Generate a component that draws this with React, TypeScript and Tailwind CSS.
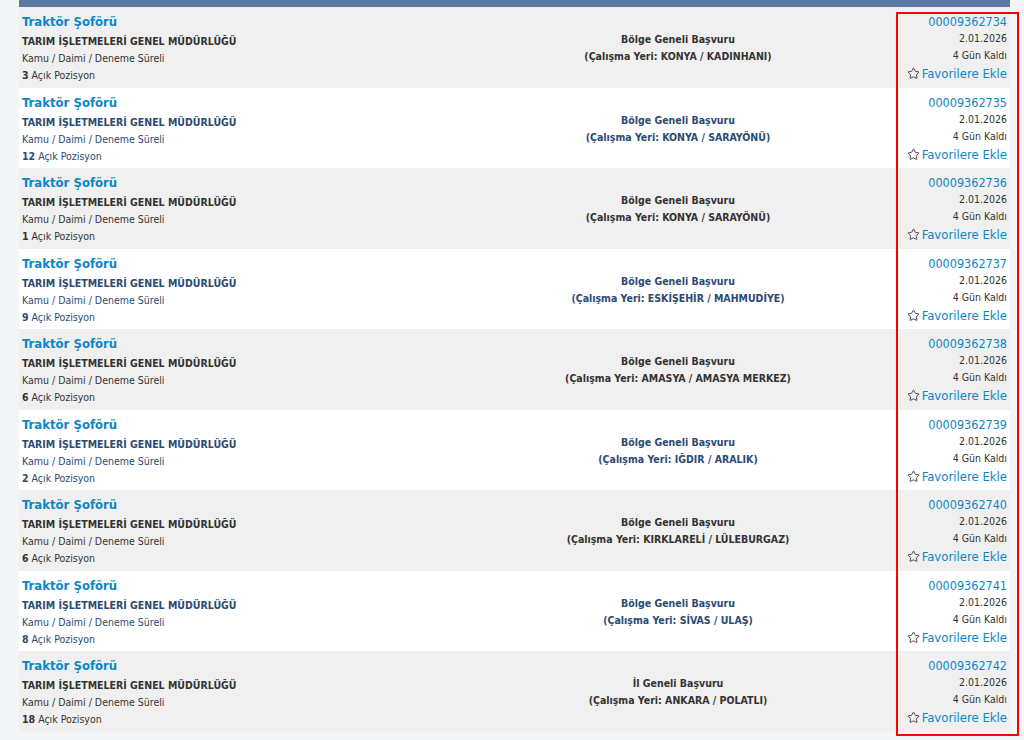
import { Star } from "lucide-react";

interface Ilan {
  no: string;
  kapsam: string;
  yer: string;
  pozisyon: number;
}

const ilanlar: Ilan[] = [
  { no: "00009362734", kapsam: "Bölge Geneli Başvuru", yer: "KONYA / KADINHANI", pozisyon: 3 },
  { no: "00009362735", kapsam: "Bölge Geneli Başvuru", yer: "KONYA / SARAYÖNÜ", pozisyon: 12 },
  { no: "00009362736", kapsam: "Bölge Geneli Başvuru", yer: "KONYA / SARAYÖNÜ", pozisyon: 1 },
  { no: "00009362737", kapsam: "Bölge Geneli Başvuru", yer: "ESKİŞEHİR / MAHMUDİYE", pozisyon: 9 },
  { no: "00009362738", kapsam: "Bölge Geneli Başvuru", yer: "AMASYA / AMASYA MERKEZ", pozisyon: 6 },
  { no: "00009362739", kapsam: "Bölge Geneli Başvuru", yer: "IĞDIR / ARALIK", pozisyon: 2 },
  { no: "00009362740", kapsam: "Bölge Geneli Başvuru", yer: "KIRKLARELİ / LÜLEBURGAZ", pozisyon: 6 },
  { no: "00009362741", kapsam: "Bölge Geneli Başvuru", yer: "SİVAS / ULAŞ", pozisyon: 8 },
  { no: "00009362742", kapsam: "İl Geneli Başvuru", yer: "ANKARA / POLATLI", pozisyon: 18 },
];

function IlanSatiri({ ilan, even }: { ilan: Ilan; even: boolean }) {
  // beyaz satırlarda metin lacivert, gri satırlarda koyu gri
  const txt = even ? "text-[#2c4a72]" : "text-[#333333]";
  return (
    <div className={`flex h-[80.5px] ${even ? "bg-white" : "bg-[#f0f0f0]"}`}>
      <div className="w-[436px] pl-[3px] pt-[6px]">
        <div className="text-[13px] font-bold leading-[17px] text-[#0b86c9]">Traktör Şoförü</div>
        <div className={`mt-[3px] text-[10.5px] font-bold leading-[17px] ${txt}`}>
          TARIM İŞLETMELERİ GENEL MÜDÜRLÜĞÜ
        </div>
        <div className={`text-[10.5px] leading-[17px] ${txt}`}>Kamu / Daimi / Deneme Süreli</div>
        <div className={`text-[10.5px] leading-[17px] ${txt}`}>
          <span className="font-bold">{ilan.pozisyon}</span> Açık Pozisyon
        </div>
      </div>
      <div
        className={`flex w-[446px] flex-col items-center justify-center pt-[2px] text-[10.5px] font-bold leading-[17px] ${txt}`}
      >
        <div>{ilan.kapsam}</div>
        <div>(Çalışma Yeri: {ilan.yer})</div>
      </div>
      <div className="flex flex-1 flex-col items-end whitespace-nowrap pr-[3px] pt-[6px] text-[#333333]">
        <div className="text-[12.5px] leading-[17px] text-[#0b86c9]">{ilan.no}</div>
        <div className="text-[10.5px] leading-[17px]">2.01.2026</div>
        <div className="text-[10.5px] leading-[17px]">4 Gün Kaldı</div>
        <div className="mt-[1px] flex items-center gap-[2px] text-[13px] leading-[17px] text-[#0b86c9]">
          <Star className="h-[13px] w-[13px] text-[#333333]" strokeWidth={1.6} />
          Favorilere Ekle
        </div>
      </div>
    </div>
  );
}

export default function App() {
  return (
    <div
      className="relative h-[740px] w-[1024px] overflow-hidden bg-[#f4f5f6]"
      style={{ fontFamily: '"DejaVu Sans Condensed", "DejaVu Sans", Verdana, sans-serif' }}
    >
      <div className="ml-[19px] w-[991px]">
        <div className="h-[7px] bg-[#5a7a9f]" />
        {ilanlar.map((ilan, i) => (
          <IlanSatiri key={ilan.no} ilan={ilan} even={i % 2 === 1} />
        ))}
      </div>
      <div className="pointer-events-none absolute left-[896px] top-[12px] h-[724px] w-[123px] border-2 border-[#ff0000]" />
    </div>
  );
}
